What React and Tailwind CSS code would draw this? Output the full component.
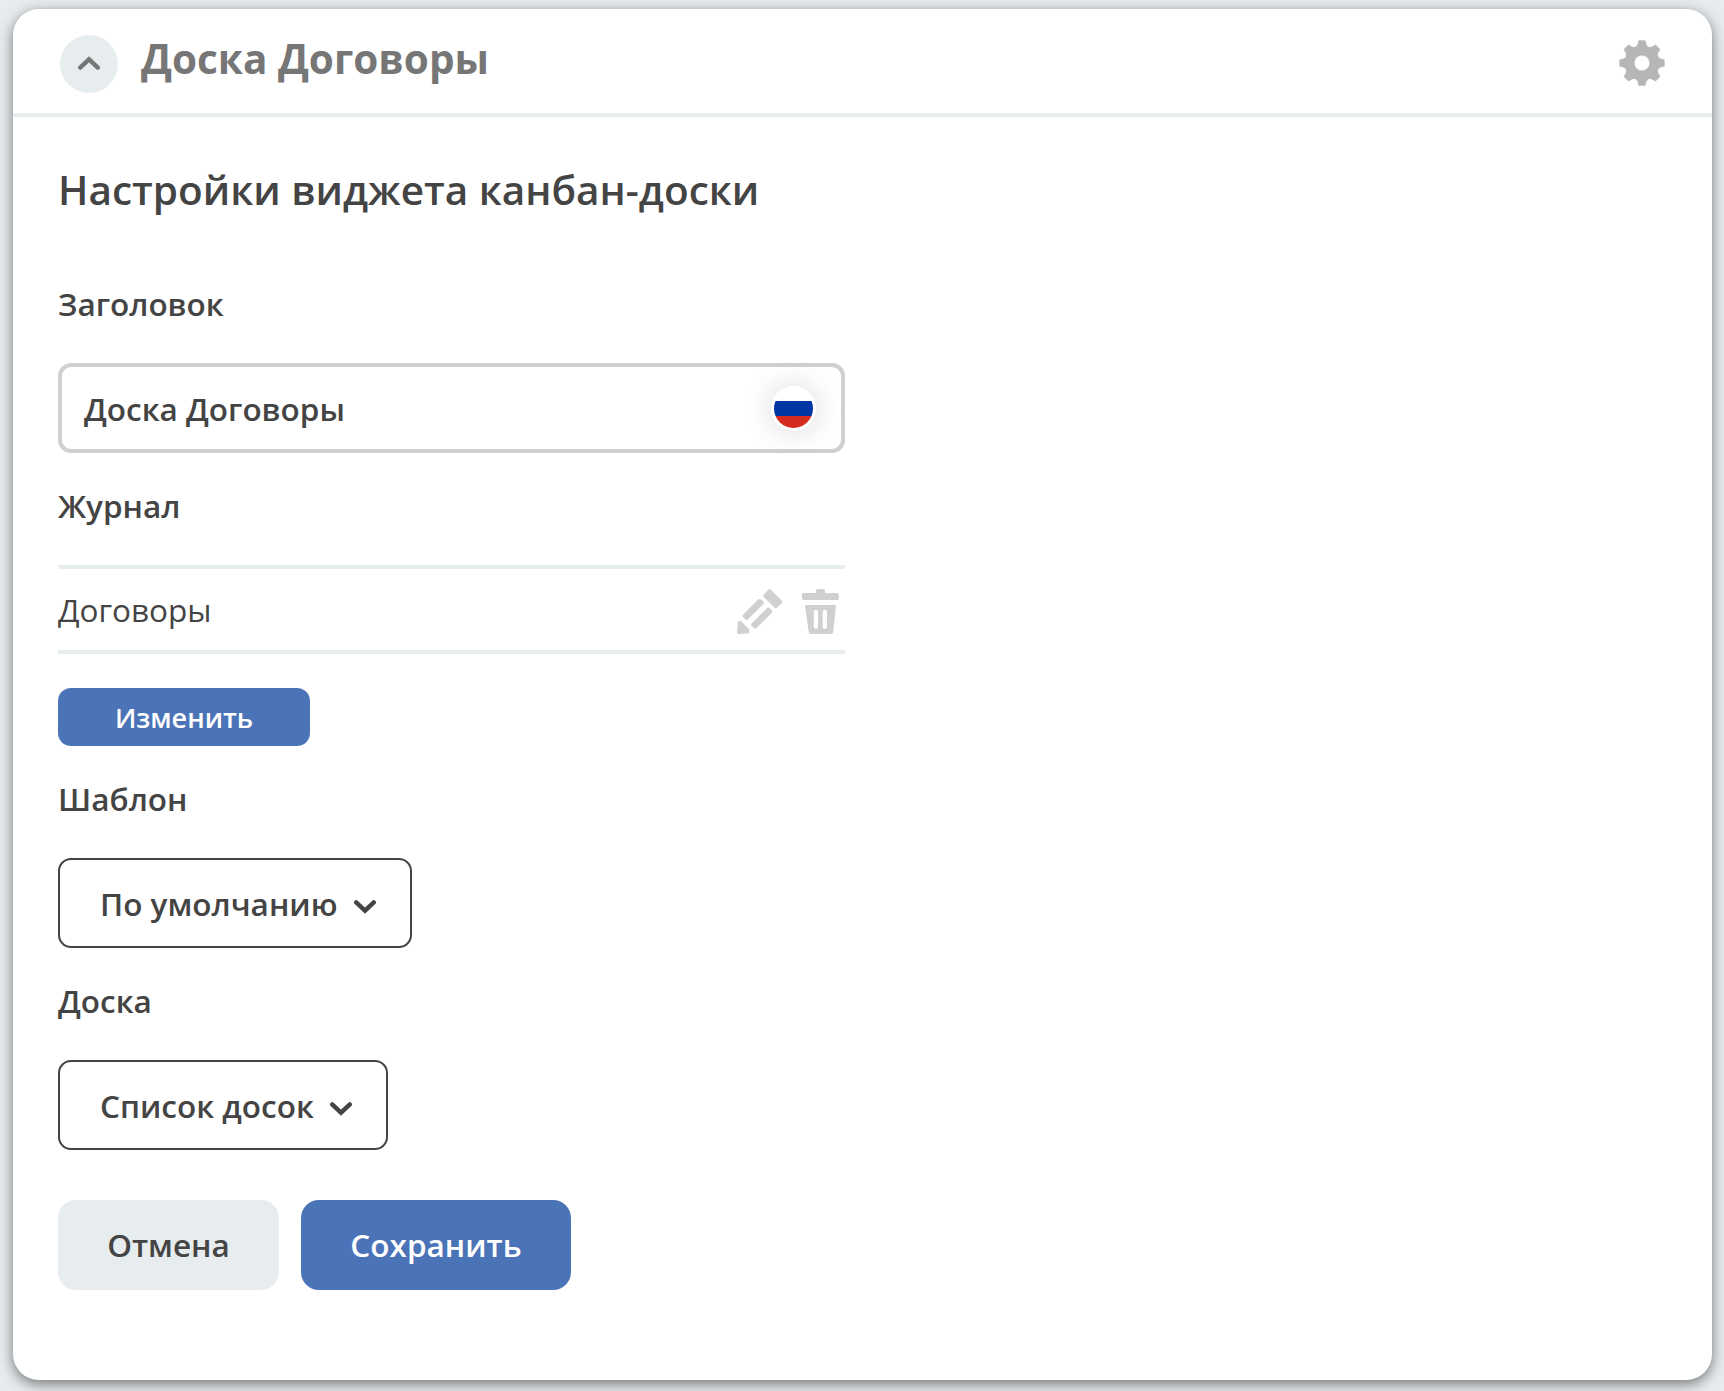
import React from "react";

const GEAR_PATH = (() => {
  const turn = (x, y, k) => {
    const a = (k * Math.PI) / 4;
    return `${(x * Math.cos(a) - y * Math.sin(a)).toFixed(2)} ${(x * Math.sin(a) + y * Math.cos(a)).toFixed(2)}`;
  };
  let d = "";
  for (let k = 0; k < 8; k++) {
    const p = (x, y) => turn(x, y, k);
    d += `${k ? "L" : "M"}${p(-3.3, -22.4)} L${p(3.3, -22.4)} C${p(4, -20)} ${p(3.9, -17.1)} ${p(6.6, -16)} C${p(9.3, -14.85)} ${p(11.3, -17)} ${p(13.5, -18.17)} `;
  }
  return d + "Z M7.7 0 A7.7 7.7 0 1 0 -7.7 0 A7.7 7.7 0 1 0 7.7 0 Z";
})();

function Gear() {
  return (
    <svg className="h-[46px] w-[46px]" viewBox="-23 -23 46 46" fill="#b6b6b6" fillRule="evenodd">
      <path d={GEAR_PATH} stroke="#b6b6b6" strokeWidth="0.4" strokeLinejoin="round" />
    </svg>
  );
}

function Chevron({ up = false, className = "" }) {
  return (
    <svg className={`h-[14px] w-[22px] ${className}`} viewBox="0 0 22 14" fill="none" stroke="currentColor" strokeWidth="4.4" strokeLinecap="round" strokeLinejoin="miter">
      <path d={up ? "M2.2 11.6 11 3.3 19.8 11.6" : "M2.2 2.4 11 10.7 19.8 2.4"} />
    </svg>
  );
}

function Pencil() {
  return (
    <svg className="h-[46px] w-[46px]" viewBox="0 0 46 46" fill="#d0d0d0" stroke="#d0d0d0" strokeWidth="4" strokeLinejoin="round">
      <path d="M28.4 6.9 32.4 2.2 43.2 13 38.8 17Z" />
      <path d="M7.6 26.8 22.6 12 24.8 13.8 9.6 28.8Z" />
      <path d="M16.2 35.7 31.2 20.7 33.3 22.6 18.4 37.4Z" />
      <path strokeWidth="3" d="M2.2 33.6 3.2 33.4 11 41.2 10.8 43 1.6 43.6Z" />
    </svg>
  );
}

function Trash() {
  return (
    <svg className="h-[46px] w-[37px]" viewBox="0 0 37 46" fill="#d0d0d0" fillRule="evenodd">
      <path d="M16 0H21Q23 0 23 2V4H35.3Q36.8 4 36.8 5.5V9.5Q36.8 11 35.3 11H1.5Q0 11 0 9.5V5.5Q0 4 1.5 4H14V2Q14 0 16 0Z" />
      <path d="M4.5 16H32.5Q34.1 16 34 17.6L31.2 43.2Q31 45 29.2 45H8.8Q7 45 6.8 43.2L3 17.6Q2.9 16 4.5 16ZM13.8 20.7Q11.8 20.7 11.8 22.7V38Q11.8 40 13.8 40Q16 40 16 38V22.7Q16 20.7 13.8 20.7ZM22.9 20.7Q20.7 20.7 20.7 22.7V38Q20.7 40 22.9 40Q25 40 25 38V22.7Q25 20.7 22.9 20.7Z" />
    </svg>
  );
}

function Flag() {
  return (
    <span className="flex h-[45px] w-[45px] flex-col overflow-hidden rounded-full border-[3px] border-white shadow-[0_0_30px_rgba(0,0,0,0.16)]">
      <span className="h-3 bg-white" />
      <span className="h-[15px] bg-[#0037a5]" />
      <span className="h-3 bg-[#d62c1f]" />
    </span>
  );
}

function Label({ children }) {
  return <div className="mt-[33px] mb-[39px] h-10 text-[31.5px] leading-10 font-semibold">{children}</div>;
}

function Select({ children }) {
  return (
    <button className="flex h-[90px] items-center gap-4 rounded-[13px] border-2 border-[#444444] pr-[34px] pl-10 text-[31.5px] leading-10 font-semibold">
      <span className="pt-0.5">{children}</span>
      <Chevron className="mt-2" />
    </button>
  );
}

export default function App() {
  return (
    <div className="h-[1391px] w-[1724px] overflow-hidden bg-[#e7ecee] pt-[9px] pl-[13px] font-['Open_Sans',sans-serif] text-[#444444]">
      <div className="h-[1371px] w-[1699px] rounded-[26px] bg-white shadow-[0_4px_14px_rgba(0,0,0,0.5)]">
        <header className="flex h-[108px] items-start border-b-4 border-[#e7ecee] pr-[47px] pl-[47px]">
          <button className="mt-[26px] flex h-[58px] w-[58px] items-center justify-center rounded-full bg-[#e7ecee] text-[#767676]">
            <Chevron up className="-mt-0.5" />
          </button>
          <h1 className="mt-[22px] ml-[23px] text-[40.5px] leading-[56px] font-bold text-[#767676]">Доска Договоры</h1>
          <button className="mt-[31px] ml-auto">
            <Gear />
          </button>
        </header>
        <main className="flex flex-col items-start pt-[45px] pl-[45px]">
          <h2 className="mb-[33px] text-[40.5px] leading-[56px] font-semibold">Настройки виджета канбан-доски</h2>

          <Label>Заголовок</Label>
          <div className="flex h-[90px] w-[787px] items-center justify-between rounded-[13px] border-4 border-[#d0d0d0] pr-[25px] pl-[22px] text-[31.5px] leading-10 font-semibold">
            <span className="pt-0.5">Доска Договоры</span>
            <Flag />
          </div>

          <Label>Журнал</Label>
          <div className="flex h-[89px] w-[787px] items-center justify-between border-y-4 border-[#e7ecee] pr-[6px] text-[31.5px] leading-10">
            <span className="pt-px">Договоры</span>
            <span className="flex items-start gap-[19px] pt-1">
              <Pencil />
              <Trash />
            </span>
          </div>
          <button className="mt-[34px] h-[58px] w-[252px] rounded-[13px] bg-[#4b74b8] pt-0.5 text-[27px] leading-9 font-semibold text-white">Изменить</button>

          <Label>Шаблон</Label>
          <Select>По умолчанию</Select>

          <Label>Доска</Label>
          <Select>Список досок</Select>

          <div className="mt-[50px] flex gap-[22px] text-[31.5px] leading-10 font-semibold">
            <button className="h-[90px] w-[221px] rounded-[18px] bg-[#e7ecee]">Отмена</button>
            <button className="h-[90px] w-[270px] rounded-[18px] bg-[#4b74b8] text-white">Сохранить</button>
          </div>
        </main>
      </div>
    </div>
  );
}
